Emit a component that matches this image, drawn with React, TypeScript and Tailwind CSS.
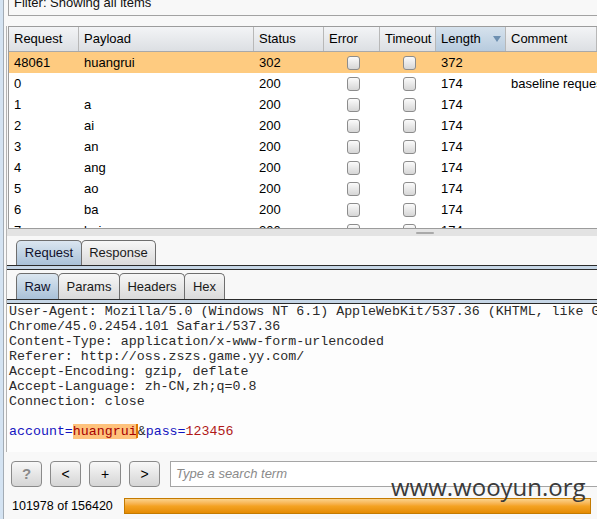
import React from "react";

const rows: [string, string, string, string, string][] = [
  ["48061", "huangrui", "302", "372", ""],
  ["0", "", "200", "174", "baseline request"],
  ["1", "a", "200", "174", ""],
  ["2", "ai", "200", "174", ""],
  ["3", "an", "200", "174", ""],
  ["4", "ang", "200", "174", ""],
  ["5", "ao", "200", "174", ""],
  ["6", "ba", "200", "174", ""],
  ["7", "bai", "200", "174", ""],
];

const cols = "grid grid-cols-[70px_175px_70px_56px_56px_70px_1fr]";

function Check() {
  return (
    <span className="block w-[13px] h-[14px] rounded-[3px] border border-[#8c8c8c] bg-linear-to-b from-[#fbfbfb] to-[#d6d6d6]" />
  );
}

function Tab({ label, w, selected }: { label: string; w: number; selected?: boolean }) {
  return (
    <div
      style={{ width: w }}
      className={
        "h-full flex items-center justify-center rounded-t-[5px] border border-b-0 border-[#6e6e6e] -mr-px text-[13px] " +
        (selected
          ? "bg-linear-to-b from-[#dbe6f0] to-[#a9c1d8] text-[#10102a]"
          : "bg-linear-to-b from-[#f7f7f7] to-[#dadada] text-[#1a1a1a]")
      }
    >
      {label}
    </div>
  );
}

function Btn({ children, w = 31, cls = "" }: { children: React.ReactNode; w?: number; cls?: string }) {
  return (
    <div
      style={{ width: w }}
      className={
        "h-[26px] rounded-[4px] border border-[#8a8a8a] bg-linear-to-b from-[#f8f8f8] to-[#d5d5d5] flex items-center justify-center text-[14px] shrink-0 " +
        cls
      }
    >
      {children}
    </div>
  );
}

export default function App() {
  const header = ["Request", "Payload", "Status", "Error", "Timeout", "Length", "Comment"];
  return (
    <div className="w-[597px] h-[519px] overflow-hidden bg-[#f8f8f8] flex relative font-['Liberation_Sans',Arial,sans-serif] text-[13px] text-black">
      <div className="w-[3px] shrink-0 bg-[#d4e3f2]" />
      <div className="w-px shrink-0 bg-[#a3acb5]" />
      <div className="flex-1 min-w-0 flex flex-col">
        {/* Filter box */}
        <div className="ml-[4px] -mt-[14px] h-[30px] shrink-0 border border-r-0 border-[#a2a2a2] pt-[8px] pl-[5px] leading-[16px] text-[#111] whitespace-nowrap">
          Filter: Showing all items
        </div>

        <div className="mt-[10px] ml-[2px] border-l border-[#b4b4b4] flex flex-col">
          {/* Table */}
          <div className="ml-px border-t border-l border-b border-[#9c9c9c] bg-white">
            <div className={cols + " h-[25px] border-b border-[#a8a8a8]"}>
              {header.map((h) => (
                <div
                  key={h}
                  className={
                    "flex items-center pl-[5px] border-r border-[#b8b8b8] whitespace-nowrap " +
                    (h === "Length"
                      ? "bg-linear-to-b from-[#d6e2ed] to-[#b7cbde] justify-between pr-[4px]"
                      : "bg-linear-to-b from-[#f3f4f6] to-[#dcdfe3]")
                  }
                >
                  <span>{h}</span>
                  {h === "Length" && (
                    <svg width="8" height="6" viewBox="0 0 8 6">
                      <polygon points="0,0 8,0 4,6" fill="#6d8fb0" />
                    </svg>
                  )}
                </div>
              ))}
            </div>
            <div className="h-[176px] overflow-hidden">
              {rows.map((r, i) => (
                <div key={i} className={cols + " h-[21px] items-center " + (i === 0 ? "bg-[#fecb80]" : "")}>
                  <div className="pl-[5px]">{r[0]}</div>
                  <div className="pl-[5px]">{r[1]}</div>
                  <div className="pl-[5px]">{r[2]}</div>
                  <div className="flex justify-center pl-[2px]">
                    <Check />
                  </div>
                  <div className="flex justify-center pl-[2px]">
                    <Check />
                  </div>
                  <div className="pl-[5px]">{r[3]}</div>
                  <div className="pl-[5px] whitespace-nowrap overflow-hidden">{r[4]}</div>
                </div>
              ))}
            </div>
          </div>

          {/* Splitter */}
          <div className="h-[7px] bg-[#e3e3e3] flex items-center pl-[409px]">
            <div className="w-[18px] h-[2px] rounded-full bg-[#a9a9a9]" />
          </div>

          {/* Request/Response tabs */}
          <div className="pt-[4px]">
            <div className="h-[25px] flex items-end pl-[9px]">
              <Tab label="Request" w={66} selected />
              <Tab label="Response" w={75} />
            </div>
            <div className="h-[5px] border-y border-[#2b2b2b] bg-[#c6d6e6]" />
          </div>

          {/* Raw/Params tabs */}
          <div className="pt-[3px]">
            <div className="h-[26px] flex items-end pl-[9px]">
              <Tab label="Raw" w={43} selected />
              <Tab label="Params" w={62} />
              <Tab label="Headers" w={66} />
              <Tab label="Hex" w={41} />
            </div>
            <div className="h-[5px] border-y border-[#2b2b2b] bg-[#c6d6e6]" />
          </div>

          {/* Editor */}
          <div className="h-[148px] bg-[#fdfdfd] pl-[2px] font-['Liberation_Mono','Courier_New',monospace] text-[13.3px] leading-[15px] whitespace-pre text-[#2a2a2a] overflow-hidden">
            <div>User-Agent: Mozilla/5.0 (Windows NT 6.1) AppleWebKit/537.36 (KHTML, like Gecko)</div>
            <div>Chrome/45.0.2454.101 Safari/537.36</div>
            <div>Content-Type: application/x-www-form-urlencoded</div>
            <div>Referer: http://oss.zszs.game.yy.com/</div>
            <div>Accept-Encoding: gzip, deflate</div>
            <div>Accept-Language: zh-CN,zh;q=0.8</div>
            <div>Connection: close</div>
            <div> </div>
            <div>
              <span className="text-[#1414c0]">account=</span>
              <span className="bg-[#fec27c] text-[#a80000]">huangrui</span>
              <span className="inline-block w-[2px] h-[14px] align-middle -ml-px bg-[#e07800]" />
              <span>&amp;</span>
              <span className="text-[#1414c0]">pass=</span>
              <span className="text-[#b01818]">123456</span>
            </div>
          </div>
        </div>

        {/* Toolbar */}
        <div className="mt-[9px] flex items-center h-[26px] pl-[7px] gap-[8px]">
          <Btn cls="text-[#8a8a8a] font-bold text-[15px]">?</Btn>
          <Btn>&lt;</Btn>
          <Btn w={32}>+</Btn>
          <Btn>&gt;</Btn>
          <div className="ml-[2px] flex-1 h-[26px] -mr-px border border-[#a5a5a5] bg-white flex items-center pl-[5px] italic text-[#8a8a8a] text-[13px]">
            Type a search term
          </div>
        </div>

        {/* Status */}
        <div className="mt-[11px] h-[16px] flex items-center">
          <div className="w-[120px] pl-[8px] shrink-0 whitespace-nowrap text-[12.5px]">101978 of 156420</div>
          <div className="flex-1 h-[16px] mr-[6px] border border-[#c47a00] bg-linear-to-b from-[#fbd38a] via-[#f4a322] to-[#e58b00]" />
        </div>
      </div>

      <div className="absolute left-[391px] top-[475px] font-['Open_Sans',sans-serif] text-[24px] leading-[24px] text-[#3a3a3a] whitespace-nowrap">
        www.wooyun.org
      </div>
    </div>
  );
}
